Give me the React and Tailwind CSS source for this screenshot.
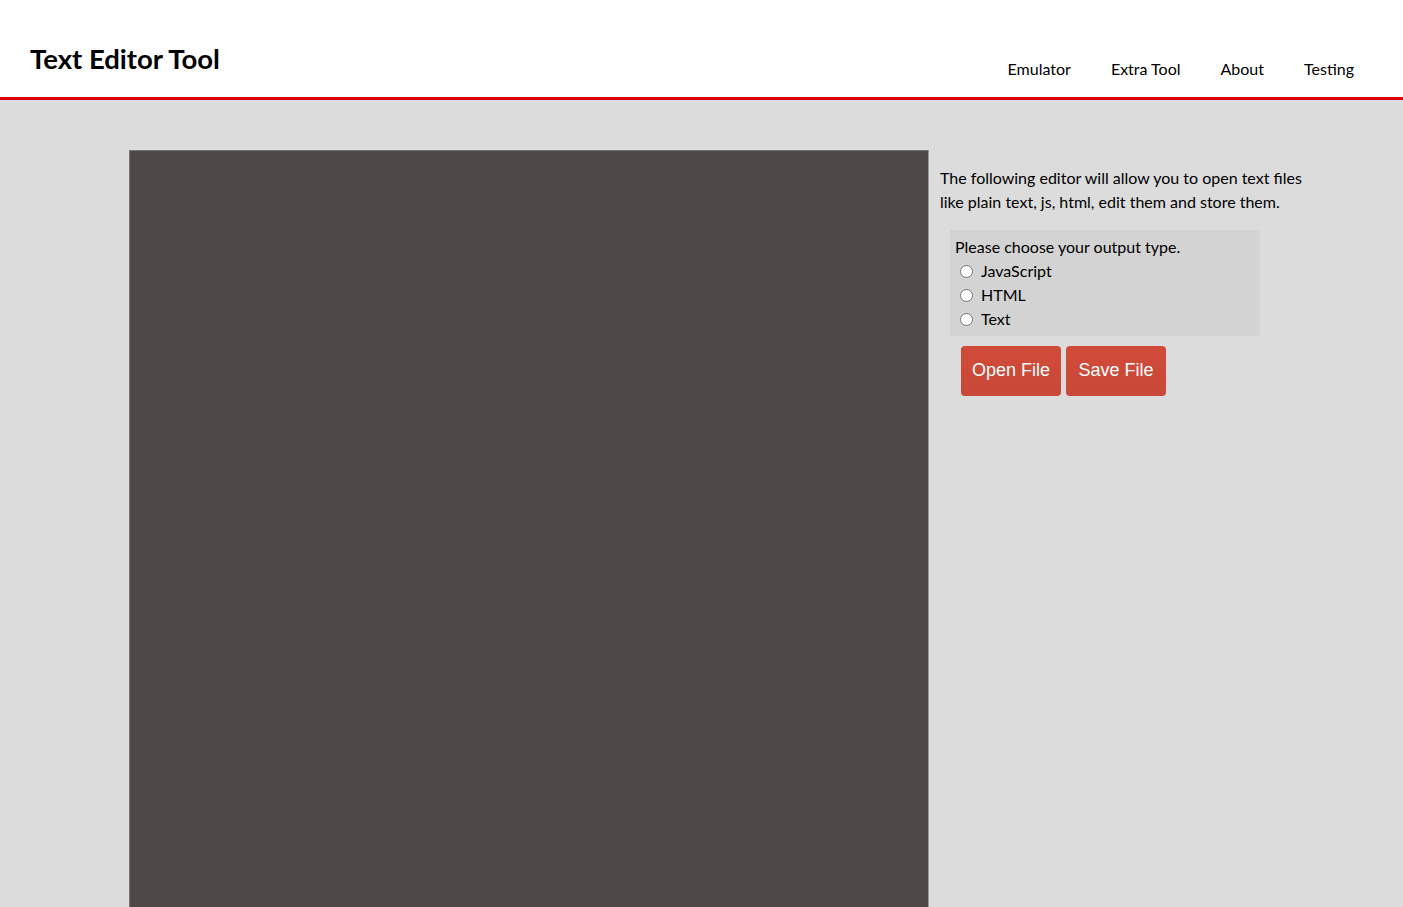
import React from "react";

function Radio({ label }) {
  return (
    <label className="flex items-center h-[24px]">
      <span className="ml-[5px] mr-[8px] w-[13px] h-[13px] rounded-full border border-[#767676] bg-white shrink-0" />
      <span>{label}</span>
    </label>
  );
}

export default function App() {
  return (
    <div className="min-h-screen bg-[#dcdcdc] font-['Lato',sans-serif] text-[16px] text-black">
      <header className="h-[100px] bg-white border-b-[3px] border-[#e00000] flex">
        <h1 className="ml-[30px] mt-[42px] text-[27.5px] leading-[33px] font-bold h-fit">Text Editor Tool</h1>
        <nav className="ml-auto mr-[49px] mt-[57px] flex gap-[40px] leading-[24px] h-fit">
          <a>Emulator</a>
          <a>Extra Tool</a>
          <a>About</a>
          <a>Testing</a>
        </nav>
      </header>
      <main className="flex pl-[129px] pt-[50px]">
        <textarea className="w-[800px] h-[800px] bg-[#4e4946] border border-[#767676] border-r-[#9a9a9a] resize-none shrink-0" />
        <div className="pl-[11px] pt-[16px] w-[380px]">
          <p className="leading-[24px]">
            The following editor will allow you to open text files like plain text, js, html, edit them and store them.
          </p>
          <div className="mt-[16px] ml-[10px] w-[310px] bg-[#d3d3d3] p-[5px] leading-[24px]">
            <div>Please choose your output type.</div>
            <Radio label="JavaScript" />
            <Radio label="HTML" />
            <Radio label="Text" />
          </div>
          <div className="mt-[10px] ml-[21px] flex gap-[5px] font-['Liberation_Sans',sans-serif] text-[18px]">
            <button className="w-[100px] h-[50px] pb-[2px] rounded-[4px] bg-gradient-to-b from-[#d24b39] to-[#c84839] text-white">Open File</button>
            <button className="w-[100px] h-[50px] pb-[2px] rounded-[4px] bg-gradient-to-b from-[#d24b39] to-[#c84839] text-white">Save File</button>
          </div>
        </div>
      </main>
    </div>
  );
}
